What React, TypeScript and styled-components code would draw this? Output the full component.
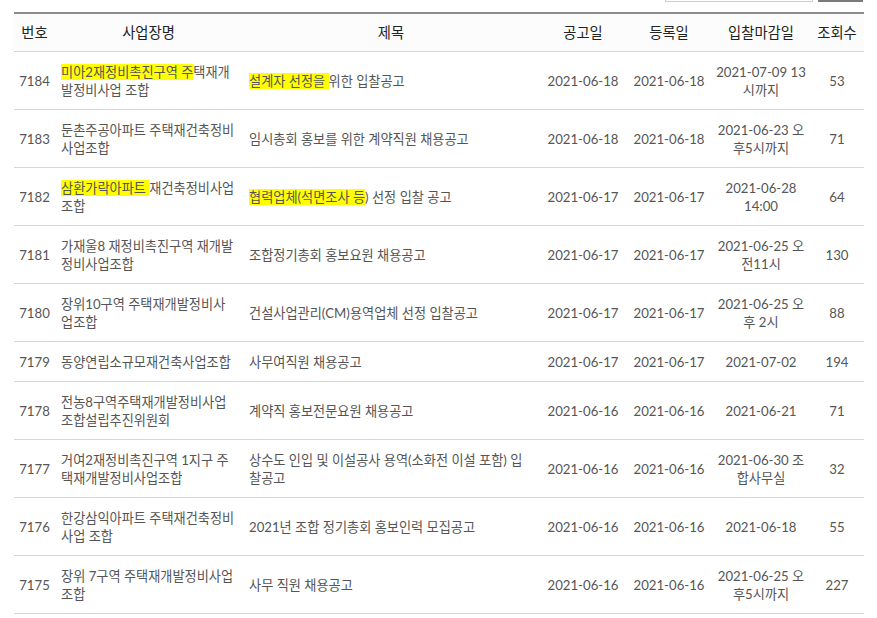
import React from "react";
import styled, { createGlobalStyle } from "styled-components";

const GlobalStyle = createGlobalStyle`
  html, body { margin: 0; padding: 0; background: #ffffff; }
  body {
    font-family: "Lato", "Noto Sans CJK KR", sans-serif;
    overflow: hidden;
  }
`;

const Page = styled.div`
  padding: 0 13px 0 14px;
  width: 850px;
`;

const SearchBar = styled.div`
  display: flex;
  justify-content: flex-end;
  gap: 5px;
  height: 30px;
  margin-top: -28px;
  padding-right: 1px;
`;

const SearchInput = styled.input`
  width: 148px;
  height: 30px;
  box-sizing: border-box;
  border: 1px solid #cccccc;
  background: #ffffff;
`;

const SearchButton = styled.button`
  width: 45px;
  height: 30px;
  border: none;
  background: #7a7a7a;
  color: #ffffff;
`;

const Table = styled.table`
  margin-top: 10px;
  width: 850px;
  table-layout: fixed;
  border-collapse: collapse;
  border-top: 2px solid #8c8c8c;
`;

const Th = styled.th`
  padding: 10px 2px 9px;
  line-height: 18px;
  font-size: 14.3px;
  font-weight: 400;
  color: #222222;
  background: #fcfcfc;
  text-align: center;
  border-bottom: 1px solid #d6d6d6;
`;

const Row = styled.tr`
  border-bottom: 1px solid #d6d6d6;
`;

const Td = styled.td`
  padding: 11px 3px 10px;
  line-height: 18px;
  font-size: 13.2px;
  color: #555555;
  text-align: center;
  vertical-align: middle;
`;

const NameCell = styled(Td)`
  text-align: left;
  padding-left: 6px;
  padding-right: 6.5px;
`;

const TitleCell = styled(Td)`
  text-align: left;
  padding-left: 7px;
  padding-right: 12px;
`;

const Mark = styled.span`
  background: #ffff00;
`;

type Item = {
  no: string;
  name: React.ReactNode;
  title: React.ReactNode;
  notice: string;
  reg: string;
  deadline: string;
  views: string;
};

const items: Item[] = [
  {
    no: "7184",
    name: (
      <>
        <Mark>미아2재정비촉진구역 주</Mark>택재개발정비사업 조합
      </>
    ),
    title: (
      <>
        <Mark>설계자 선정을 </Mark>위한 입찰공고
      </>
    ),
    notice: "2021-06-18",
    reg: "2021-06-18",
    deadline: "2021-07-09 13시까지",
    views: "53",
  },
  {
    no: "7183",
    name: "둔촌주공아파트 주택재건축정비사업조합",
    title: "임시총회 홍보를 위한 계약직원 채용공고",
    notice: "2021-06-18",
    reg: "2021-06-18",
    deadline: "2021-06-23 오후5시까지",
    views: "71",
  },
  {
    no: "7182",
    name: (
      <>
        <Mark>삼환가락아파트 </Mark>재건축정비사업 조합
      </>
    ),
    title: (
      <>
        <Mark>협력업체(석면조사 등</Mark>) 선정 입찰 공고
      </>
    ),
    notice: "2021-06-17",
    reg: "2021-06-17",
    deadline: "2021-06-28 14:00",
    views: "64",
  },
  {
    no: "7181",
    name: "가재울8 재정비촉진구역 재개발정비사업조합",
    title: "조합정기총회 홍보요원 채용공고",
    notice: "2021-06-17",
    reg: "2021-06-17",
    deadline: "2021-06-25 오전11시",
    views: "130",
  },
  {
    no: "7180",
    name: "장위10구역 주택재개발정비사업조합",
    title: "건설사업관리(CM)용역업체 선정 입찰공고",
    notice: "2021-06-17",
    reg: "2021-06-17",
    deadline: "2021-06-25 오후 2시",
    views: "88",
  },
  {
    no: "7179",
    name: "동양연립소규모재건축사업조합",
    title: "사무여직원 채용공고",
    notice: "2021-06-17",
    reg: "2021-06-17",
    deadline: "2021-07-02",
    views: "194",
  },
  {
    no: "7178",
    name: "전농8구역주택재개발정비사업조합설립추진위원회",
    title: "계약직 홍보전문요원 채용공고",
    notice: "2021-06-16",
    reg: "2021-06-16",
    deadline: "2021-06-21",
    views: "71",
  },
  {
    no: "7177",
    name: "거여2재정비촉진구역 1지구 주택재개발정비사업조합",
    title: "상수도 인입 및 이설공사 용역(소화전 이설 포함) 입찰공고",
    notice: "2021-06-16",
    reg: "2021-06-16",
    deadline: "2021-06-30 조합사무실",
    views: "32",
  },
  {
    no: "7176",
    name: "한강삼익아파트 주택재건축정비사업 조합",
    title: "2021년 조합 정기총회 홍보인력 모집공고",
    notice: "2021-06-16",
    reg: "2021-06-16",
    deadline: "2021-06-18",
    views: "55",
  },
  {
    no: "7175",
    name: "장위 7구역 주택재개발정비사업조합",
    title: "사무 직원 채용공고",
    notice: "2021-06-16",
    reg: "2021-06-16",
    deadline: "2021-06-25 오후5시까지",
    views: "227",
  },
];

const widths = [41, 187, 298, 86, 86, 98, 54];
const headers = ["번호", "사업장명", "제목", "공고일", "등록일", "입찰마감일", "조회수"];

export default function App() {
  return (
    <>
      <GlobalStyle />
      <Page>
        <SearchBar>
          <SearchInput type="text" />
          <SearchButton type="button" />
        </SearchBar>
        <Table>
          <colgroup>
            {widths.map((w, i) => (
              <col key={i} style={{ width: w }} />
            ))}
          </colgroup>
          <thead>
            <tr>
              {headers.map((h) => (
                <Th key={h}>{h}</Th>
              ))}
            </tr>
          </thead>
          <tbody>
            {items.map((it) => (
              <Row key={it.no}>
                <Td>{it.no}</Td>
                <NameCell>{it.name}</NameCell>
                <TitleCell>{it.title}</TitleCell>
                <Td>{it.notice}</Td>
                <Td>{it.reg}</Td>
                <Td>{it.deadline}</Td>
                <Td>{it.views}</Td>
              </Row>
            ))}
          </tbody>
        </Table>
      </Page>
    </>
  );
}
